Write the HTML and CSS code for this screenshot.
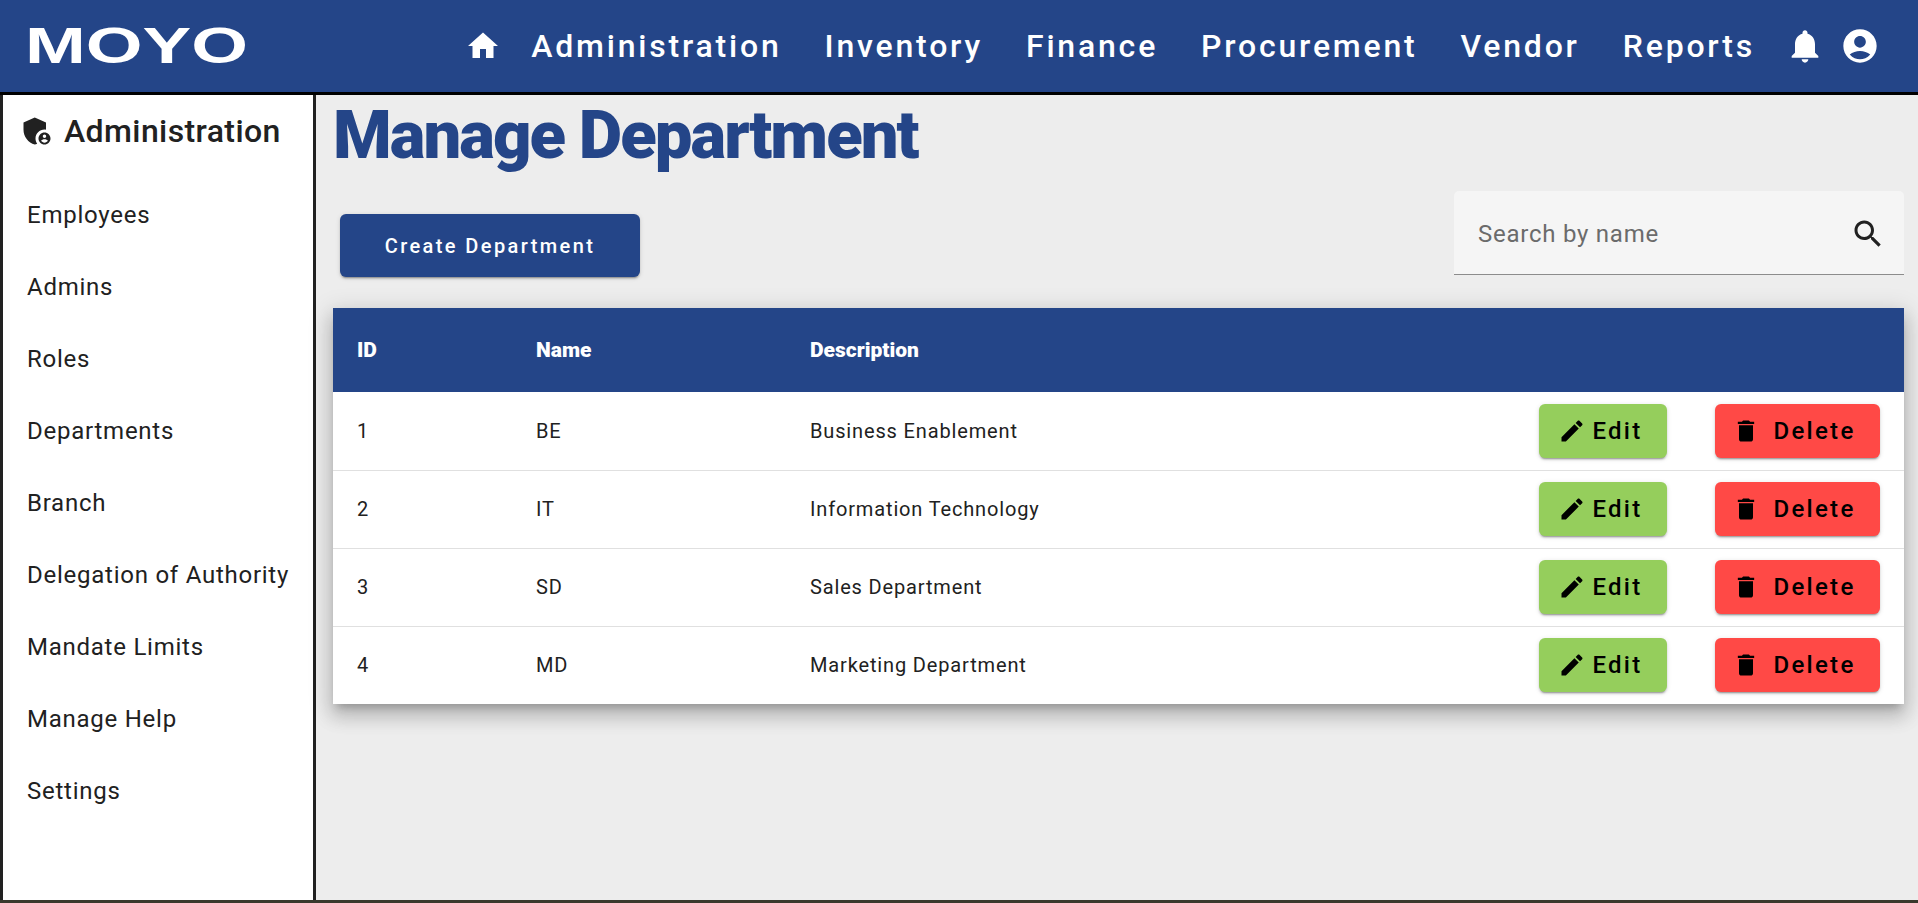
FILE: index.html
```html
<!DOCTYPE html>
<html lang="en">

<head>
    <meta charset="UTF-8" />
    <meta name="viewport" content="width=device-width, initial-scale=1.0" />
    <title>Manage Department</title>
    <link rel="stylesheet" href="styles.css">
</head>

<body>
    <header class="topbar">
        <div class="logo"><span class="logo-text">MOYO</span></div>
        <nav class="top-nav">
            <svg class="nav-icon home-icon" viewBox="0 0 24 24"><path d="M10 20v-6h4v6h5v-8h3L12 3 2 12h3v8z"/></svg>
            <a>Administration</a>
            <a>Inventory</a>
            <a>Finance</a>
            <a>Procurement</a>
            <a>Vendor</a>
            <a>Reports</a>
            <div class="nav-tools">
                <svg class="nav-icon" viewBox="0 0 24 24"><path d="M12 22c1.1 0 2-.9 2-2h-4c0 1.1.89 2 2 2zm6-6v-5c0-3.07-1.64-5.64-4.5-6.32V4c0-.83-.67-1.5-1.5-1.5s-1.5.67-1.5 1.5v.68C7.63 5.36 6 7.92 6 11v5l-2 2v1h16v-1l-2-2z"/></svg>
                <svg class="nav-icon" viewBox="0 0 24 24"><path d="M12 2C6.48 2 2 6.48 2 12s4.48 10 10 10 10-4.48 10-10S17.52 2 12 2zm0 4c1.93 0 3.5 1.57 3.5 3.5S13.93 13 12 13s-3.5-1.57-3.5-3.5S10.07 6 12 6zm0 14c-2.03 0-4.43-.82-6.14-2.88C7.55 15.8 9.68 15 12 15s4.45.8 6.14 2.12C16.43 19.18 14.03 20 12 20z"/></svg>
            </div>
        </nav>
    </header>

    <div class="page">
        <aside class="sidebar">
            <div class="side-title">
                <svg class="side-icon" viewBox="0 0 24 24"><path d="M17 11c.34 0 .67.04 1 .09V6.27L10.5 3 3 6.27v4.91c0 4.54 3.2 8.79 7.5 9.82.55-.13 1.08-.32 1.6-.55-.69-.98-1.1-2.17-1.1-3.45 0-3.31 2.69-6 6-6z"/><path d="M17 13c-2.21 0-4 1.79-4 4s1.79 4 4 4 4-1.79 4-4-1.79-4-4-4zm0 1.38c.62 0 1.12.51 1.12 1.12s-.51 1.12-1.12 1.12-1.12-.51-1.12-1.12.5-1.12 1.12-1.12zm0 5.37c-.93 0-1.74-.46-2.24-1.17.05-.72 1.51-1.08 2.24-1.08s2.19.36 2.24 1.08c-.5.71-1.31 1.17-2.24 1.17z"/></svg>
                <span>Administration</span>
            </div>
            <ul class="side-list">
                <li>Employees</li>
                <li>Admins</li>
                <li>Roles</li>
                <li>Departments</li>
                <li>Branch</li>
                <li>Delegation of Authority</li>
                <li>Mandate Limits</li>
                <li>Manage Help</li>
                <li>Settings</li>
            </ul>
        </aside>

        <main class="content">
            <h1 class="page-title">Manage Department</h1>

            <div class="toolbar">
                <button class="create-btn">Create Department</button>
                <div class="search-box">
                    <span class="search-label">Search by name</span>
                    <svg class="search-icon" viewBox="0 0 24 24"><path d="M15.5 14h-.79l-.28-.27C15.41 12.59 16 11.11 16 9.5 16 5.91 13.09 3 9.5 3S3 5.91 3 9.5 5.91 16 9.5 16c1.61 0 3.09-.59 4.23-1.57l.27.28v.79l5 4.99L20.49 19l-4.99-5zm-6 0C7.01 14 5 11.99 5 9.5S7.01 5 9.5 5 14 7.01 14 9.5 11.99 14 9.5 14z"/></svg>
                </div>
            </div>

            <table class="dept-table">
                <thead>
                    <tr>
                        <th class="col-id">ID</th>
                        <th class="col-name">Name</th>
                        <th>Description</th>
                        <th class="col-actions"></th>
                    </tr>
                </thead>
                <tbody>
                    <tr>
                        <td>1</td>
                        <td>BE</td>
                        <td>Business Enablement</td>
                        <td>
                            <div class="actions">
                                <button class="btn edit-btn"><svg viewBox="0 0 24 24"><path d="M3 17.25V21h3.75L17.81 9.94l-3.75-3.75L3 17.25zM20.71 7.04c.39-.39.39-1.02 0-1.41l-2.34-2.34c-.39-.39-1.02-.39-1.41 0l-1.83 1.83 3.75 3.75 1.83-1.83z"/></svg>Edit</button>
                                <button class="btn delete-btn"><svg viewBox="0 0 24 24"><path d="M6 19c0 1.1.9 2 2 2h8c1.1 0 2-.9 2-2V7H6v12zM19 4h-3.5l-1-1h-5l-1 1H5v2h14V4z"/></svg>Delete</button>
                            </div>
                        </td>
                    </tr>
                    <tr>
                        <td>2</td>
                        <td>IT</td>
                        <td>Information Technology</td>
                        <td>
                            <div class="actions">
                                <button class="btn edit-btn"><svg viewBox="0 0 24 24"><path d="M3 17.25V21h3.75L17.81 9.94l-3.75-3.75L3 17.25zM20.71 7.04c.39-.39.39-1.02 0-1.41l-2.34-2.34c-.39-.39-1.02-.39-1.41 0l-1.83 1.83 3.75 3.75 1.83-1.83z"/></svg>Edit</button>
                                <button class="btn delete-btn"><svg viewBox="0 0 24 24"><path d="M6 19c0 1.1.9 2 2 2h8c1.1 0 2-.9 2-2V7H6v12zM19 4h-3.5l-1-1h-5l-1 1H5v2h14V4z"/></svg>Delete</button>
                            </div>
                        </td>
                    </tr>
                    <tr>
                        <td>3</td>
                        <td>SD</td>
                        <td>Sales Department</td>
                        <td>
                            <div class="actions">
                                <button class="btn edit-btn"><svg viewBox="0 0 24 24"><path d="M3 17.25V21h3.75L17.81 9.94l-3.75-3.75L3 17.25zM20.71 7.04c.39-.39.39-1.02 0-1.41l-2.34-2.34c-.39-.39-1.02-.39-1.41 0l-1.83 1.83 3.75 3.75 1.83-1.83z"/></svg>Edit</button>
                                <button class="btn delete-btn"><svg viewBox="0 0 24 24"><path d="M6 19c0 1.1.9 2 2 2h8c1.1 0 2-.9 2-2V7H6v12zM19 4h-3.5l-1-1h-5l-1 1H5v2h14V4z"/></svg>Delete</button>
                            </div>
                        </td>
                    </tr>
                    <tr>
                        <td>4</td>
                        <td>MD</td>
                        <td>Marketing Department</td>
                        <td>
                            <div class="actions">
                                <button class="btn edit-btn"><svg viewBox="0 0 24 24"><path d="M3 17.25V21h3.75L17.81 9.94l-3.75-3.75L3 17.25zM20.71 7.04c.39-.39.39-1.02 0-1.41l-2.34-2.34c-.39-.39-1.02-.39-1.41 0l-1.83 1.83 3.75 3.75 1.83-1.83z"/></svg>Edit</button>
                                <button class="btn delete-btn"><svg viewBox="0 0 24 24"><path d="M6 19c0 1.1.9 2 2 2h8c1.1 0 2-.9 2-2V7H6v12zM19 4h-3.5l-1-1h-5l-1 1H5v2h14V4z"/></svg>Delete</button>
                            </div>
                        </td>
                    </tr>
                </tbody>
            </table>
        </main>
    </div>
</body>

</html>
```

FILE: styles.css
```css
html, body {
    height: 100%;
}

body {
    margin: 0;
    font-family: 'Roboto', sans-serif;
    background-color: #ededed;
    color: #212121;
    display: flex;
    flex-direction: column;
    overflow: hidden;
}

/* Top bar */
.topbar {
    height: 92px;
    flex: none;
    background-color: #244588;
    border-bottom: 3px solid #000;
    display: flex;
    align-items: center;
    justify-content: space-between;
    color: #fff;
}

.logo {
    padding-left: 25px;
}

.logo-text {
    display: inline-block;
    font-family: 'Liberation Sans', sans-serif;
    font-weight: bold;
    font-size: 50px;
    line-height: 1;
    color: #fff;
    transform: scaleX(1.46);
    transform-origin: left center;
}

.top-nav {
    display: flex;
    align-items: center;
    padding-right: 38px;
    font-size: 32px;
    font-weight: 500;
    letter-spacing: 2.8px;
    gap: 43px;
}

.nav-icon {
    width: 40px;
    height: 40px;
    fill: #fff;
    display: block;
}

.home-icon {
    width: 36px;
    height: 36px;
    margin-right: -13px;
}

.nav-tools {
    display: flex;
    gap: 15px;
    margin-left: -13px;
}

/* Sidebar + content */
.page {
    flex: 1;
    display: flex;
    min-height: 0;
    border-bottom: 3px solid #3a382c;
}

.sidebar {
    width: 310px;
    flex: none;
    background-color: #fff;
    border-left: 3px solid #212121;
    border-right: 3px solid #212121;
}

.side-title {
    display: flex;
    align-items: center;
    gap: 9px;
    height: 71px;
    margin-bottom: 13px;
    padding-left: 16px;
    font-size: 32px;
    font-weight: 500;
    letter-spacing: 0.4px;
}

.side-icon {
    width: 36px;
    height: 36px;
    fill: #212121;
}

.side-list {
    list-style: none;
    margin: 0;
    padding: 0;
}

.side-list li {
    height: 72px;
    line-height: 72px;
    padding-left: 24px;
    font-size: 24px;
    letter-spacing: 0.75px;
}

.content {
    flex: 1;
    min-width: 0;
    padding: 0 14px 0 17px;
}

.page-title {
    margin: 0;
    color: #244588;
    font-size: 67px;
    font-weight: 900;
    letter-spacing: -1.95px;
    line-height: 80px;
}

.toolbar {
    display: flex;
    justify-content: space-between;
    align-items: flex-start;
    margin-top: 16px;
    height: 84px;
    padding-left: 7px;
}

.create-btn {
    width: 300px;
    height: 63px;
    margin-top: 23px;
    background-color: #244588;
    color: #fff;
    border: none;
    border-radius: 6px;
    font-family: inherit;
    font-size: 20px;
    font-weight: 500;
    letter-spacing: 2.4px;
    box-shadow: 0 3px 1px -2px rgba(0, 0, 0, 0.2), 0 2px 2px 0 rgba(0, 0, 0, 0.14), 0 1px 5px 0 rgba(0, 0, 0, 0.12);
}

.search-box {
    width: 450px;
    height: 84px;
    box-sizing: border-box;
    background-color: #f5f5f5;
    border-bottom: 1px solid #8c8c8c;
    border-radius: 5px 5px 0 0;
    display: flex;
    align-items: center;
    justify-content: space-between;
    padding: 2px 24px 0;
    font-size: 24px;
    letter-spacing: 0.75px;
    color: #6b6b6b;
}

.search-icon {
    width: 36px;
    height: 36px;
    fill: #212121;
    margin-right: -6px;
}

/* Table */
.dept-table {
    width: 100%;
    margin-top: 33px;
    border-collapse: separate;
    border-spacing: 0;
    table-layout: fixed;
    background-color: #fff;
    box-shadow: 0 7px 8px -4px rgba(0, 0, 0, 0.2), 0 12px 17px 2px rgba(0, 0, 0, 0.14), 0 5px 22px 4px rgba(0, 0, 0, 0.12);
}

.dept-table th {
    height: 84px;
    background-color: #244588;
    color: #fff;
    font-size: 21px;
    font-weight: 900;
    text-align: left;
    padding: 0 0 0 24px;
}

.dept-table td {
    height: 78px;
    box-sizing: border-box;
    padding: 0 0 0 24px;
    font-size: 20px;
    letter-spacing: 0.85px;
}

.dept-table tbody tr + tr td {
    border-top: 1px solid #e0e0e0;
    padding-bottom: 1px;
}

.col-id {
    width: 155px;
}

.col-name {
    width: 250px;
}

.col-actions {
    width: 400px;
}

.actions {
    display: flex;
    justify-content: flex-end;
    gap: 48px;
    padding-right: 24px;
}

.btn {
    height: 54px;
    border: none;
    border-radius: 6px;
    font-family: inherit;
    font-size: 24px;
    font-weight: 500;
    letter-spacing: 2.3px;
    color: #000;
    display: flex;
    align-items: center;
    justify-content: center;
    box-shadow: 0 3px 1px -2px rgba(0, 0, 0, 0.2), 0 2px 2px 0 rgba(0, 0, 0, 0.14), 0 1px 5px 0 rgba(0, 0, 0, 0.12);
}

.btn svg {
    width: 28px;
    height: 28px;
    fill: #000;
}

.edit-btn {
    width: 128px;
    background-color: #95ce5c;
    gap: 6px;
    padding: 0 5px 0 0;
}

.delete-btn {
    width: 165px;
    background-color: #ff4946;
    gap: 13px;
    padding: 0 7px 0 0;
}
```
